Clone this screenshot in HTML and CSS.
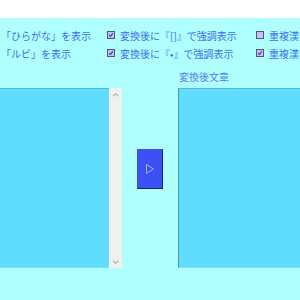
FILE: index.html
```html
<!DOCTYPE html>
<html lang="ja">
<head>
    <meta charset="UTF-8">
    <title>ルビ変換</title>
    <link rel="stylesheet" href="styles.css">
</head>
<body>
    <div class="head"></div>
    <div class="main">
        <div class="opts">
            <div class="opt_row">
                <span class="opt_name">「ひらがな」を表示</span>
                <span class="chk on"><svg viewBox="0 0 8 8"><path d="M1.5 4 L3.2 5.8 L6.5 1.8" /></svg></span>
                <span class="opt_text">変換後に『[]』で強調表示</span>
                <span class="chk"></span>
                <span class="opt_text">重複漢字</span>
            </div>
            <div class="opt_row">
                <span class="opt_name">「ルビ」を表示</span>
                <span class="chk on"><svg viewBox="0 0 8 8"><path d="M1.5 4 L3.2 5.8 L6.5 1.8" /></svg></span>
                <span class="opt_text">変換後に『•』で強調表示</span>
                <span class="chk on"><svg viewBox="0 0 8 8"><path d="M1.5 4 L3.2 5.8 L6.5 1.8" /></svg></span>
                <span class="opt_text">重複漢字</span>
            </div>
        </div>
        <div class="out_label">変換後文章</div>
        <div class="panes">
            <div class="pane_in">
                <div class="text_box"></div>
                <div class="scroll">
                    <svg viewBox="0 0 8 6"><path d="M1 5 L4 2 L7 5" /></svg>
                    <svg viewBox="0 0 8 6"><path d="M1 1 L4 4 L7 1" /></svg>
                </div>
            </div>
            <div class="mid">
                <button class="go"><svg viewBox="0 0 10 12"><path d="M1.5 1.5 L8.5 6 L1.5 10.5 Z" /></svg></button>
            </div>
            <div class="pane_out"></div>
        </div>
    </div>
</body>
</html>
```

FILE: styles.css
```css
*{
    box-sizing: border-box;
}
body{
    margin: 0;
    padding: 0;
    font-family: "Noto Sans CJK JP", "Noto Sans", sans-serif;
    overflow: hidden;
}
.head{
    height: 18px;
    background-color: #fff;
}
.main{
    height: 282px;
    background-color: #b0ffff;
    padding-top: 8px;
}
    .opt_row{
        display: flex;
        align-items: center;
        height: 18px;
        font-size: 10px;
        color: #4070e8;
        white-space: nowrap;
        overflow: hidden;
    }
        .opt_row > span{
            flex-shrink: 0;
        }
        .opt_name{
            width: 107px;
            padding-left: 1px;
        }
        .opt_text{
            width: 141px;
            padding-left: 5px;
        }
        .chk{
            width: 8px;
            height: 8px;
            border: 1px solid #55556a;
            background-color: #c4c0f8;
            display: flex;
        }
            .chk svg{
                width: 100%;
                height: 100%;
            }
            .chk path{
                fill: none;
                stroke: #3030c8;
                stroke-width: 1.4;
            }
    .out_label{
        height: 18px;
        margin-top: 8px;
        padding-left: 179px;
        font-size: 10px;
        line-height: 14px;
        color: #5a80e8;
    }
    .panes{
        display: flex;
        height: 180px;
    }
        .pane_in{
            width: 122px;
            display: flex;
        }
            .text_box{
                flex: 1;
                background-color: #60dcff;
                border-top: 1px solid #58b8d0;
                border-bottom: 1px solid #74e4ff;
            }
            .scroll{
                width: 13px;
                background-color: #f0f0f0;
                display: flex;
                flex-direction: column;
                justify-content: space-between;
                align-items: center;
                padding: 4px 0 3px;
            }
                .scroll svg{
                    width: 7px;
                    height: 5px;
                }
                .scroll path{
                    fill: none;
                    stroke: #a8a8a8;
                    stroke-width: 1.3;
                }
        .mid{
            width: 56px;
            padding: 61px 0 0 15px;
        }
            .go{
                width: 26px;
                height: 40px;
                padding: 0;
                border: none;
                border-right: 1px solid #20285a;
                border-bottom: 1px solid #20285a;
                background-color: #3c50f4;
                display: flex;
                align-items: center;
                justify-content: center;
            }
                .go svg{
                    width: 10px;
                    height: 12px;
                }
                .go path{
                    fill: none;
                    stroke: #a8b0ff;
                    stroke-width: 1;
                }
        .pane_out{
            flex: 1;
            background-color: #60dcff;
            border-top: 1px solid #58b8d0;
            border-left: 1px solid #4a98ac;
            border-bottom: 1px solid #74e4ff;
        }
```
